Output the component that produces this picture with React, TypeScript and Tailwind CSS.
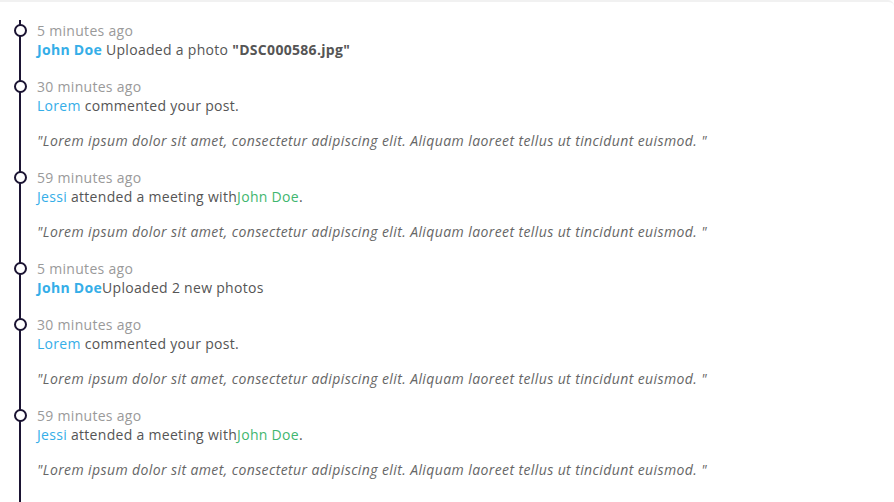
import React from "react";

type Item = {
	time: string;
	body: React.ReactNode;
	quote?: boolean;
};

const QUOTE =
	'"Lorem ipsum dolor sit amet, consectetur adipiscing elit. Aliquam laoreet tellus ut tincidunt euismod. "';

const blue = "text-[#35aee8]";
const green = "text-[#3fb66f]";

const items: Item[] = [
	{
		time: "5 minutes ago",
		body: (
			<>
				<span className={`${blue} font-bold`}>John Doe</span> Uploaded a photo{" "}
				<span className="font-bold">"DSC000586.jpg"</span>
			</>
		),
	},
	{
		time: "30 minutes ago",
		body: (
			<>
				<span className={blue}>Lorem</span> commented your post.
			</>
		),
		quote: true,
	},
	{
		time: "59 minutes ago",
		body: (
			<>
				<span className={blue}>Jessi</span> attended a meeting with
				<span className={green}>John Doe</span>.
			</>
		),
		quote: true,
	},
	{
		time: "5 minutes ago",
		body: (
			<>
				<span className={`${blue} font-bold`}>John Doe</span>Uploaded 2 new photos
			</>
		),
	},
	{
		time: "30 minutes ago",
		body: (
			<>
				<span className={blue}>Lorem</span> commented your post.
			</>
		),
		quote: true,
	},
	{
		time: "59 minutes ago",
		body: (
			<>
				<span className={blue}>Jessi</span> attended a meeting with
				<span className={green}>John Doe</span>.
			</>
		),
		quote: true,
	},
];

function TimelineItem({ item }: { item: Item }) {
	return (
		<li className="relative pb-[18px]">
			<span className="absolute left-[-23px] top-[3px] h-[13px] w-[13px] rounded-full border-2 border-[#1b1433] bg-white" />
			<div className="text-[#9a9a9a]">{item.time}</div>
			<div className="text-[#555]">{item.body}</div>
			{item.quote && (
				<p className="mt-4 italic tracking-[0.4px] text-[#666]">{QUOTE}</p>
			)}
		</li>
	);
}

export default function App() {
	return (
		<div
			className="h-[502px] w-[894px] overflow-hidden bg-white"
			style={{ fontFamily: '"Open Sans", sans-serif' }}
		>
			<div className="h-full rounded-tr-md border-t-2 border-[#f1f1f1] pt-[18px]">
				<div className="relative ml-[19px] h-full border-l-2 border-[#1b1433] pl-4 pt-px text-[14px] leading-[19px] tracking-[0.3px]">
					<ul>
						{items.map((item, i) => (
							<TimelineItem key={i} item={item} />
						))}
					</ul>
				</div>
			</div>
		</div>
	);
}
